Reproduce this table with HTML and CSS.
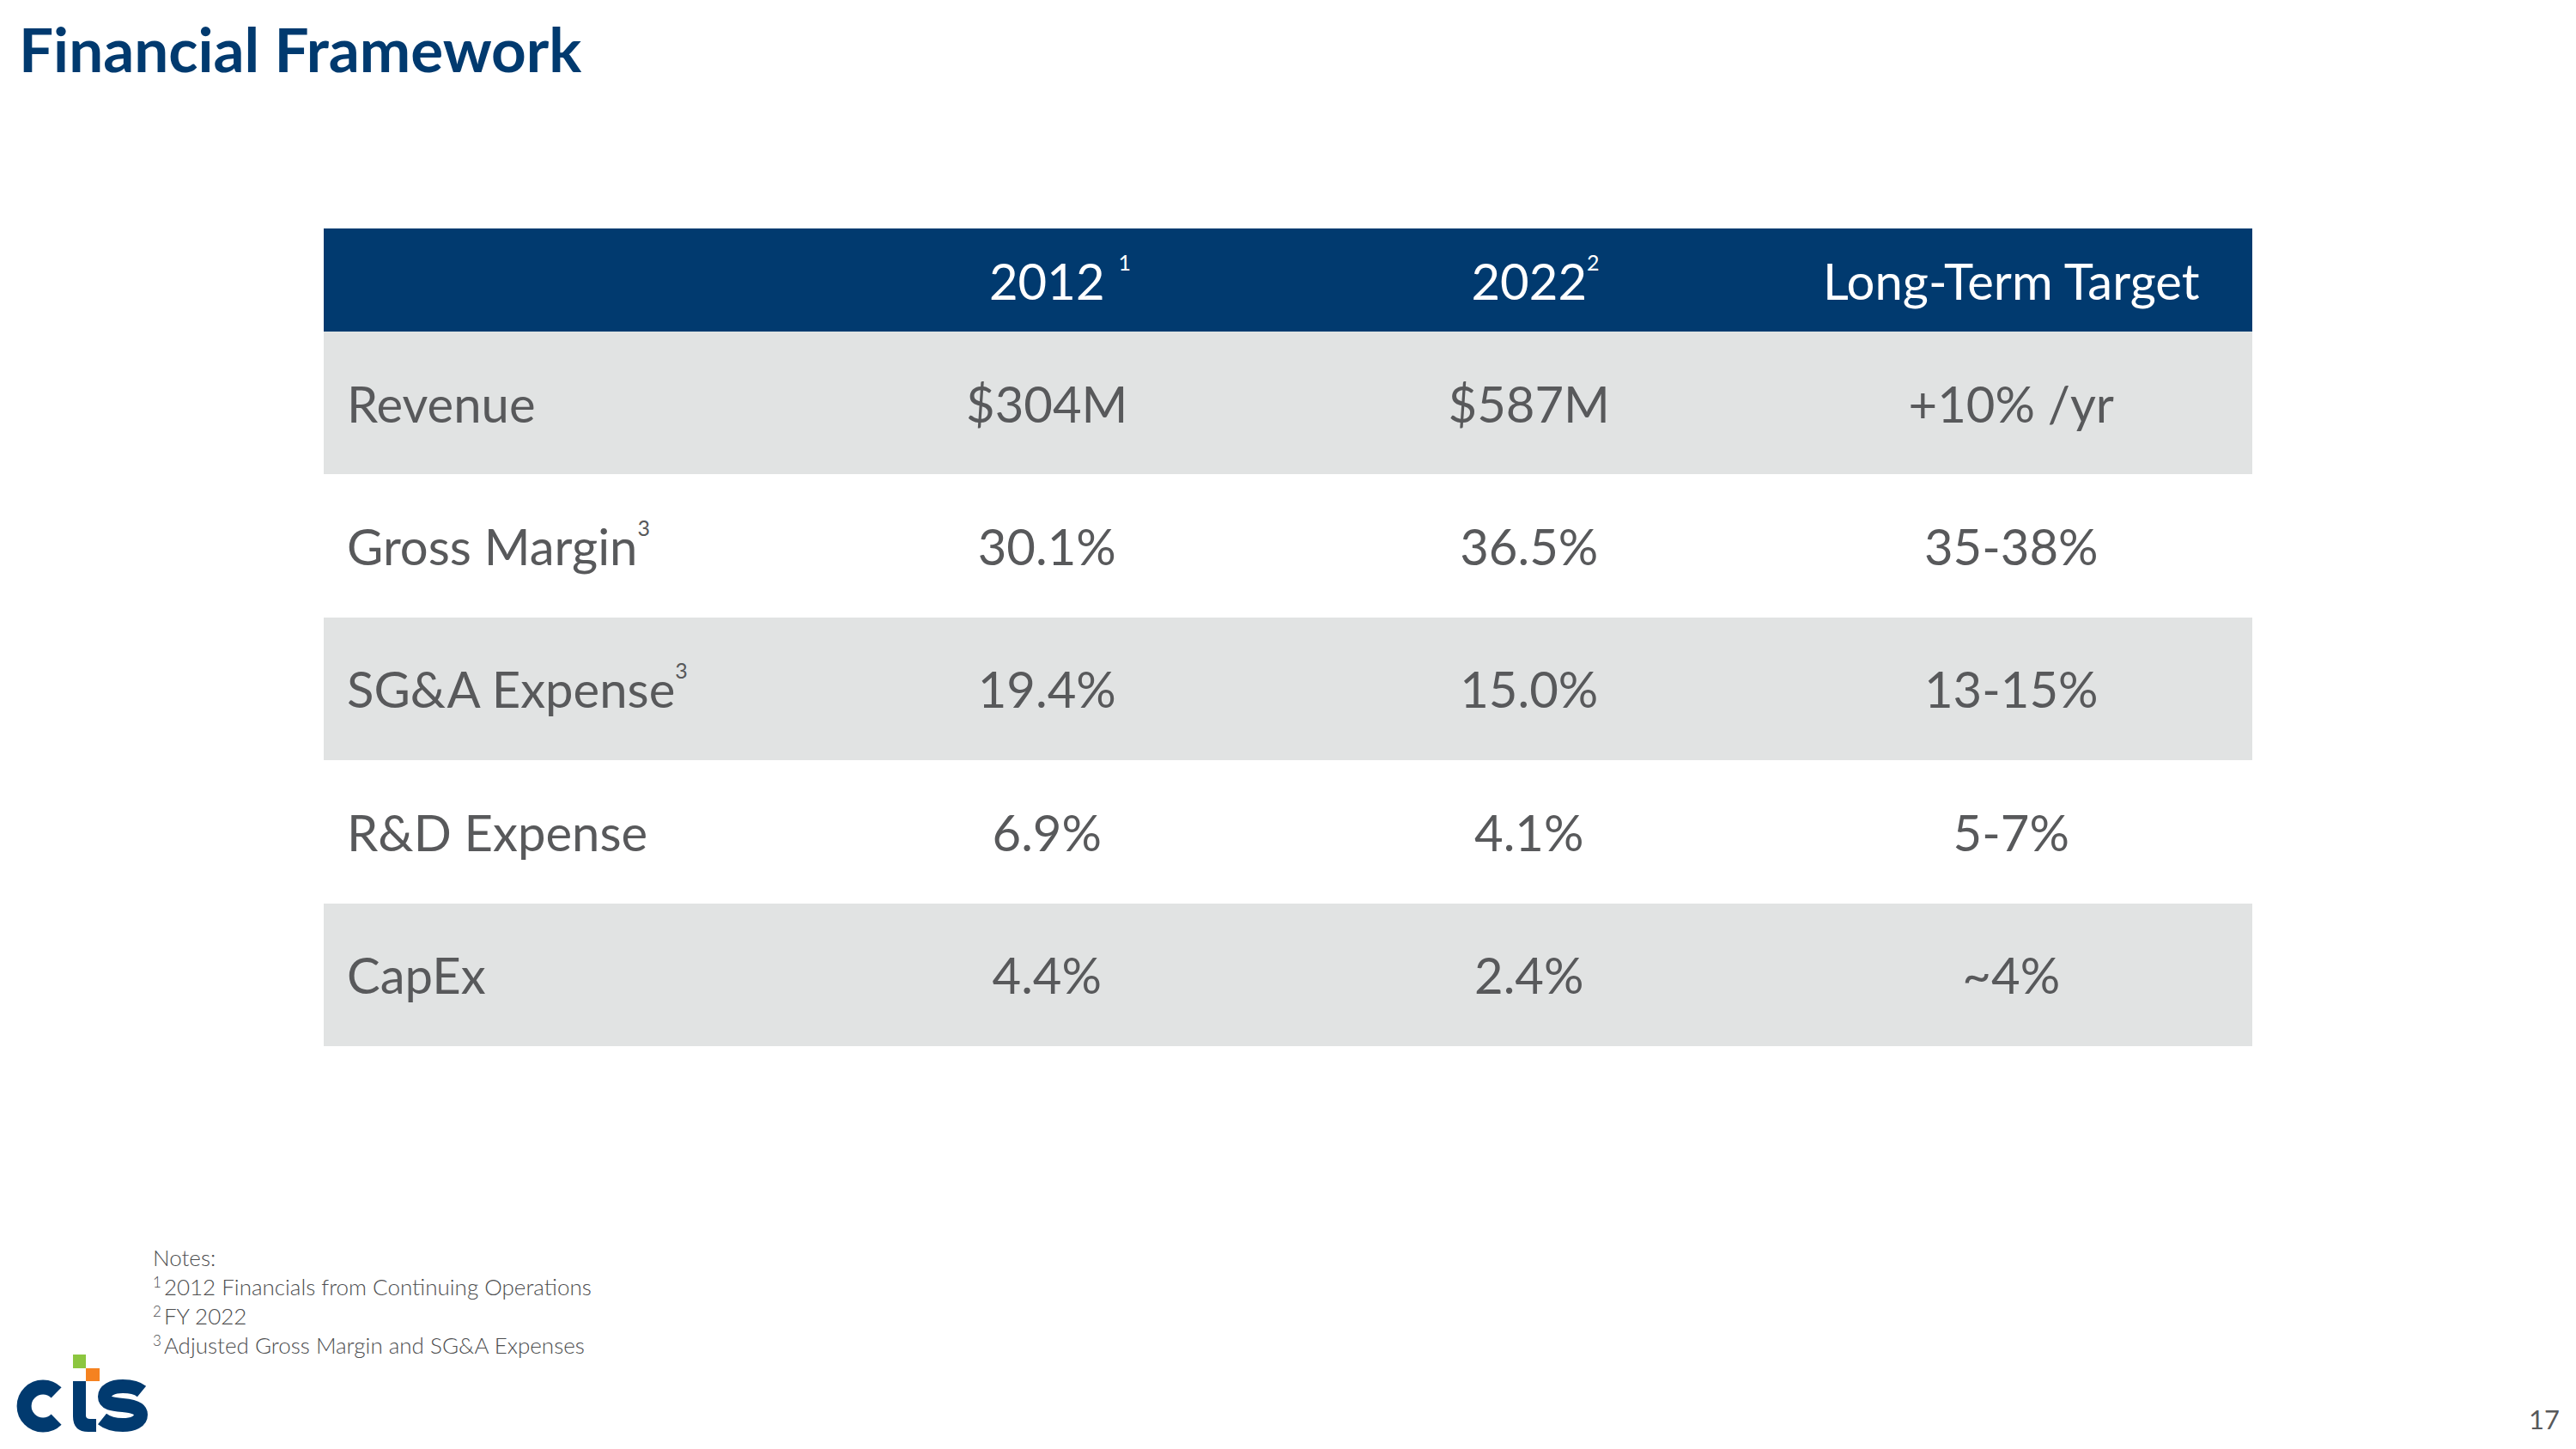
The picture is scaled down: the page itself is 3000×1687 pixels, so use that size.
FILE: index.html
```html
<!DOCTYPE html>
<html lang="en">
<head>
<meta charset="utf-8">
<title>Financial Framework</title>
<link rel="stylesheet" href="styles.css">
</head>
<body>
<div class="slide">
  <h1 class="title">Financial Framework</h1>

  <table class="fin">
    <thead>
      <tr class="head">
        <th class="label"></th>
        <th><span class="yr">2012</span><span class="fnw"><sup class="hsup gap">1</sup></span></th>
        <th><span class="yr">2022</span><span class="fnw"><sup class="hsup">2</sup></span></th>
        <th>Long-Term Target</th>
      </tr>
    </thead>
    <tbody>
      <tr class="shade">
        <td class="label">Revenue</td><td>$304M</td><td>$587M</td><td>+10% /yr</td>
      </tr>
      <tr>
        <td class="label">Gross Margin<sup class="rsup">3</sup></td><td>30.1%</td><td>36.5%</td><td>35-38%</td>
      </tr>
      <tr class="shade">
        <td class="label">SG&amp;A Expense<sup class="rsup">3</sup></td><td>19.4%</td><td>15.0%</td><td>13-15%</td>
      </tr>
      <tr>
        <td class="label">R&amp;D Expense</td><td>6.9%</td><td>4.1%</td><td>5-7%</td>
      </tr>
      <tr class="shade">
        <td class="label">CapEx</td><td>4.4%</td><td>2.4%</td><td>~4%</td>
      </tr>
    </tbody>
  </table>

  <div class="footer">
    <div class="left">
      <div class="notes">
        <div>Notes:</div>
        <div><sup class="nsup">1</sup>2012 Financials from Continuing Operations</div>
        <div><sup class="nsup">2</sup>FY 2022</div>
        <div><sup class="nsup">3</sup>Adjusted Gross Margin and SG&amp;A Expenses</div>
      </div>
      <svg class="logo" width="155" height="91" viewBox="0 0 155 91" aria-label="CTS">
        <rect x="66" y="0" width="15" height="16" fill="#8cc63f"/>
        <rect x="81" y="16" width="16" height="15" fill="#f58220"/>
        <path d="M46.6 44.4 A22 22 0 1 0 46.6 75.6" fill="none" stroke="#013a6f" stroke-width="17"/>
        <path d="M66 31 H81 V71 Q81 75 86 75 H93 V90 H84 Q66 90 66 72 Z" fill="#013a6f"/>
        <path d="M146 43 C140 38 132 37 124 37 C111 37 103 42 103 49 C103 57 112 58 124 59 C137 60 145 63 145 70 C145 78 136 82 124 82 C113 82 105 79 100 75" fill="none" stroke="#013a6f" stroke-width="16"/>
      </svg>
    </div>
    <div class="pagenum">17</div>
  </div>
</div>
</body>
</html>
```

FILE: styles.css
```css
html, body {
  margin: 0;
  padding: 0;
  background: #ffffff;
}

.slide {
  width: 3000px;
  height: 1687px;
  display: flex;
  flex-direction: column;
  font-family: "Lato", "Open Sans", "Liberation Sans", sans-serif;
  color: #58595b;
  overflow: hidden;
}

.title {
  margin: 21px 0 0 22px;
  font-size: 71px;
  line-height: 1;
  font-weight: 700;
  color: #013a6f;
}

.fin {
  margin: 174px 0 0 377px;
  width: 2246px;
  table-layout: fixed;
  border-collapse: collapse;
  border-spacing: 0;
}

.fin th,
.fin td {
  box-sizing: border-box;
  width: 25%;
  padding: 0;
  text-align: center;
  font-size: 58px;
  font-weight: 400;
  white-space: nowrap;
}

.fin .label {
  text-align: left;
  padding-left: 27px;
}

.head {
  height: 120px;
  background: #013a6f;
}

.head th {
  color: #ffffff;
}

.fin tbody tr {
  height: 166.4px;
}

.shade {
  background: #e1e3e3;
}

.fnw {
  display: inline-block;
  width: 0;
  white-space: nowrap;
}

.hsup {
  font-size: 25px;
  line-height: 0;
  vertical-align: 34px;
}

.hsup.gap {
  margin-left: 16px;
}

.rsup {
  font-size: 25px;
  line-height: 0;
  vertical-align: 34px;
}

.footer {
  margin-top: auto;
  display: flex;
  justify-content: space-between;
  align-items: flex-end;
  padding: 0 19px 19px 19px;
}

.left {
  display: flex;
  flex-direction: column;
}

.notes {
  margin-left: 159px;
  font-size: 26px;
  line-height: 34px;
  font-weight: 300;
  color: #4d4e50;
}

.nsup {
  font-size: 17px;
  line-height: 0;
  vertical-align: 9px;
  margin-right: 3px;
}

.logo {
  display: block;
  margin-top: -6px;
}

.pagenum {
  font-size: 31px;
  line-height: 1;
  color: #58595b;
}
```
